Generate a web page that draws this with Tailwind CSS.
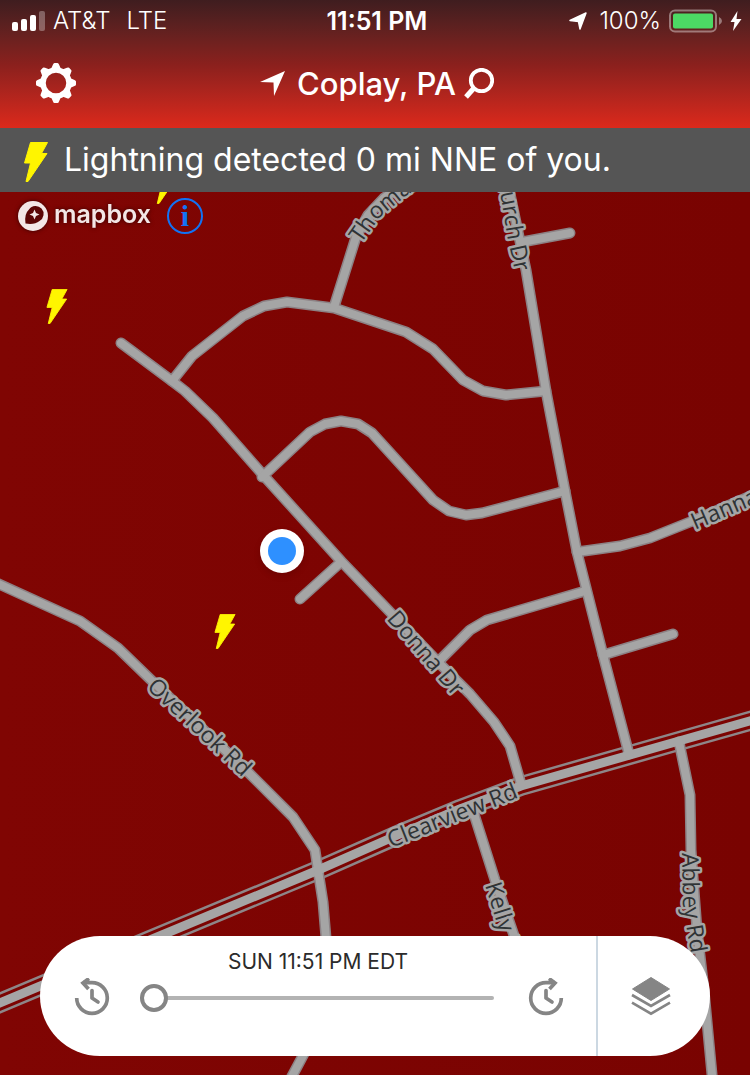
<!DOCTYPE html>
<html lang="en">
<head>
    <meta charset="UTF-8" />
    <meta name="viewport" content="width=device-width, initial-scale=1.0" />
    <title>Lightning Map</title>
    <script src="https://cdn.jsdelivr.net/npm/@tailwindcss/browser@4"></script>
</head>
<body class="flex min-h-screen flex-col bg-[#7c0402] font-['Inter',sans-serif] text-white">

<!-- Shared lightning bolt -->
<svg class="hidden">
    <symbol id="bolt" viewBox="0 0 24 40">
        <path fill="#fff500" stroke="#fff500" stroke-width="1" stroke-linejoin="round" d="M6.500.5H23.500L17.500 11.500H23L4 39.500H2L6.500 21H.5Z" />
    </symbol>
</svg>

<!-- Status bar and title -->
<header class="h-32 bg-linear-to-b from-[#3f1d1f] via-[#8a201d] to-[#dc291b]">
    <div class="grid h-[42px] grid-cols-3 items-center pr-2 pl-3 text-2xl leading-none">
        <div class="flex items-center gap-2">
            <svg class="h-5 w-[33px]" viewBox="0 0 33 20" fill="#fff">
                <rect x="0" y="11" width="6" height="9" rx="2" />
                <rect x="9" y="8" width="6" height="12" rx="2" />
                <rect x="18" y="4" width="6" height="16" rx="2" />
                <rect x="27" y="0" width="6" height="20" rx="2" opacity=".3" />
            </svg>
            <span class="font-light">AT&amp;T</span>
            <span class="ml-2 font-light">LTE</span>
        </div>
        <div class="text-center text-[25px] font-semibold">11:51 PM</div>
        <div class="flex items-center justify-end gap-2">
            <svg class="mr-1 h-[18px] w-[18px]" viewBox="0 0 18 18"><path fill="#fff" stroke="#fff" stroke-width="1.500" stroke-linejoin="round" d="M17 1 11 17 9.500 9.500 1 8.500Z" /></svg>
            <span class="font-light">100%</span>
            <svg class="h-6 w-[53px]" viewBox="0 0 53 24">
                <rect x="1" y="1.500" width="46" height="21" rx="5" fill="none" stroke="#fff" stroke-width="2" opacity=".4" />
                <rect x="4" y="4.500" width="40" height="15" rx="2" fill="#4cd964" />
                <path d="M50 8q3 1.500 3 4t-3 4Z" fill="#fff" opacity=".4" />
            </svg>
            <svg class="h-5 w-3" viewBox="0 0 12 20"><path fill="#fff" d="M7.500 0 .5 11h4L3 20l8.500-12h-5Z" /></svg>
        </div>
    </div>
    <div class="grid h-[82px] grid-cols-[80px_1fr_76px] items-center">
        <button type="button" aria-label="Settings" class="ml-9 h-10 w-10">
            <svg viewBox="-20 -20 40 40" class="h-10 w-10">
                <circle r="13" fill="none" stroke="#fff" stroke-width="5.500" />
                <g fill="#fff">
                    <path id="tooth" d="M-5-14-3-18.500Q-2.500-20-1.500-20H1.500Q2.500-20 3-18.500L5-14Z" />
                    <use href="#tooth" transform="rotate(45)" />
                    <use href="#tooth" transform="rotate(90)" />
                    <use href="#tooth" transform="rotate(135)" />
                    <use href="#tooth" transform="rotate(180)" />
                    <use href="#tooth" transform="rotate(225)" />
                    <use href="#tooth" transform="rotate(270)" />
                    <use href="#tooth" transform="rotate(315)" />
                </g>
            </svg>
        </button>
        <button type="button" class="flex items-center justify-center gap-2 text-[31px] leading-none font-medium">
            <svg class="mr-1 h-[25px] w-[25px]" viewBox="0 0 25 25"><path fill="#fff" d="M25 0 14 25 13.500 11.500 0 11Z" /></svg>
            <span>Coplay, PA</span>
            <svg class="h-[31px] w-[30px]" viewBox="0 0 30 31" fill="none" stroke="#fff">
                <circle cx="17.500" cy="12.500" r="10.700" stroke-width="3.800" />
                <path d="M10 20 2 29" stroke-width="5" />
            </svg>
        </button>
    </div>
</header>

<!-- Alert -->
<div role="alert" class="flex h-16 items-center gap-4 bg-[#555] pl-6">
    <svg class="mt-1 h-10 w-6"><use href="#bolt" /></svg>
    <p class="text-[32px] leading-none">Lightning detected 0 mi NNE of you.</p>
</div>

<!-- Map -->
<main class="relative min-h-[600px] flex-1 overflow-hidden">
    <svg class="absolute inset-0 h-full w-full" viewBox="0 192 750 883" preserveAspectRatio="xMidYMin slice" fill="none">
        <defs>
            <linearGradient id="land">
                <stop offset="0" stop-color="#800503" />
                <stop offset="1" stop-color="#790301" />
            </linearGradient>
            <g id="streets">
                <path d="M121 343 172 381 185 391 213 418 264 476 341 561 440 664 470 694 494 722 510 746 521 784" />
                <path d="M172 381 192 356 243 316 264 306 287 302 334 308 406 332 433 349 463 380 483 391 506 395 546 391" />
                <path d="M334 307 356 237 368 215 384 198 410 180" />
                <path d="M262 477 310 432 325 424 341 421 358 424 372 433 433 500 449 511 466 515 482 513 565 491" />
                <path d="M505 170 526 270 546 391 565 491 577 552 603 655 629 754" />
                <path d="M522 242 570 233" />
                <path d="M577 552 620 546 650 538 690 522 760 492" />
                <path d="M440 660 470 630 487 620 585 591" />
                <path d="M603 655 673 634" />
                <path d="M341 562 300 599" />
                <path d="M-10 580 80 621 118 648 150 679 247 771 293 817 315 850 318 870 323 902 327 950" />
                <path d="M474 814 495 880 519 950" />
                <path d="M679 742 690 795 691 850 697 930 704 990 713 1085" />
                <path d="M306 1050 290 1080" />
            </g>
            <path id="clearview" d="M-10 1007 150 940 316 871 400 834 460 809 521 786 679 741 760 718" />
            <path id="thomas" d="M361 244 380 217 407 195 450 168" />
            <path id="church" d="M484 110 502 203 508 240 515 272" />
            <path id="hanna" d="M695 530 770 498" />
            <path id="donna" d="M386 619 458 702" />
            <path id="overlook" d="M146 688 270 803" />
            <path id="clear-label" d="M391 848 530 793" />
            <path id="kelly" d="M485 885 516 985" />
            <path id="abbey" d="M682 853 683 905 687 930 697 990" />
        </defs>
        <rect x="0" y="192" width="750" height="883" fill="url(#land)" />

        <g stroke-linejoin="round">
            <use href="#clearview" stroke="#8e8688" stroke-width="20" />
            <use href="#clearview" stroke="#7c0402" stroke-width="15" />
        </g>
        <g stroke-linecap="round" stroke-linejoin="round">
            <use href="#streets" stroke="#8c8184" stroke-width="11" />
            <use href="#clearview" stroke="#a5a5a5" stroke-width="9" />
            <use href="#streets" stroke="#a5a5a5" stroke-width="8" />
        </g>

        <g class="font-['Open_Sans',sans-serif] text-[23px]" fill="#2f3335" stroke="#a5a5a5" stroke-width="5" stroke-linejoin="round" paint-order="stroke">
            <text><textPath href="#thomas">Thomas</textPath></text>
            <text text-anchor="end"><textPath href="#church" startOffset="100%">Church Dr</textPath></text>
            <text><textPath href="#hanna">Hanna</textPath></text>
            <text><textPath href="#donna">Donna Dr</textPath></text>
            <text><textPath href="#overlook">Overlook Rd</textPath></text>
            <text><textPath href="#clear-label">Clearview Rd</textPath></text>
            <text><textPath href="#kelly">Kelly Dr</textPath></text>
            <text><textPath href="#abbey">Abbey Rd</textPath></text>
        </g>

        <!-- Strikes -->
        <use href="#bolt" x="46" y="289" width="22" height="35" />
        <use href="#bolt" x="214" y="614" width="22" height="35" />
        <use href="#bolt" x="155" y="169" width="22" height="35" />

        <!-- Current position -->
        <circle cx="282" cy="551" r="22" fill="#fff" class="drop-shadow-md" />
        <circle cx="282" cy="551" r="14" fill="#2e90ff" />
    </svg>

    <div class="absolute top-1.5 left-4 flex items-center gap-4">
        <a href="#" aria-label="Mapbox" class="flex items-center gap-1 text-[#f3e6e6] drop-shadow-[0_0_2px_#300]">
            <svg class="h-[34px] w-[34px]" viewBox="0 0 34 34">
                <circle cx="17" cy="17" r="15" fill="#f3e6e6" />
                <path fill="#5b0505" d="M9.500 24.500Q8 15 13 10.500A8 8 0 1 1 23.500 22Q18.500 26 9.500 24.500Z" />
                <path fill="#f3e6e6" d="m18.500 10.500 1.500 3.500 3.500 1.500L20 17l-1.500 3.500L17 17l-3.500-1.500L17 14Z" />
            </svg>
            <span class="mb-1 text-[25px] leading-none font-semibold">mapbox</span>
        </a>
        <button type="button" aria-label="Map information" class="flex h-9 w-9 items-center justify-center rounded-full border-2 border-[#1173f5] font-['Liberation_Serif',serif] text-[30px] leading-none font-bold text-[#1173f5]">i</button>
    </div>

    <!-- Timeline -->
    <div class="absolute inset-x-10 bottom-[19px] flex h-30 overflow-hidden rounded-full bg-white">
        <div class="flex flex-1 flex-col">
            <label for="time" class="mt-4 text-center text-[21px] leading-5 text-[#2b2b2b]">SUN 11:51 PM EDT</label>
            <div class="mt-1.5 flex items-center pr-[30px] pl-8">
                <button type="button" aria-label="Back in time" class="h-10 w-10">
                    <svg class="h-10 w-10" viewBox="0 0 40 40" fill="none" stroke="#858585" stroke-width="3.700">
                        <path d="M4.700 20A15.300 15.300 0 1 0 20 4.700H11" />
                        <path d="M17 .5 11 5 16.500 11" />
                        <path stroke-linecap="round" stroke-linejoin="round" d="M20 12.500V20L26 24" />
                    </svg>
                </button>
                <input id="time" type="range" min="0" max="100" value="0" class="mr-8 ml-7 h-7 min-w-0 flex-1 appearance-none bg-transparent [&::-webkit-slider-runnable-track]:h-1 [&::-webkit-slider-runnable-track]:rounded-full [&::-webkit-slider-runnable-track]:bg-[#b3b3b3] [&::-webkit-slider-thumb]:-mt-3 [&::-webkit-slider-thumb]:h-7 [&::-webkit-slider-thumb]:w-7 [&::-webkit-slider-thumb]:appearance-none [&::-webkit-slider-thumb]:rounded-full [&::-webkit-slider-thumb]:border-4 [&::-webkit-slider-thumb]:border-solid [&::-webkit-slider-thumb]:border-[#858585] [&::-webkit-slider-thumb]:bg-white" />
                <button type="button" aria-label="Forward in time" class="h-10 w-10">
                    <svg class="h-10 w-10" viewBox="0 0 40 40" fill="none" stroke="#858585" stroke-width="3.700">
                        <path d="M35.300 20A15.300 15.300 0 1 1 20 4.700H29" />
                        <path d="M23 .5 29 5 23.500 11" />
                        <path stroke-linecap="round" stroke-linejoin="round" d="M20 12.500V20L26 24" />
                    </svg>
                </button>
            </div>
        </div>
        <button type="button" aria-label="Map layers" class="flex w-[114px] items-center border-l-2 border-[#ccd8e2] pl-[33px]">
            <svg class="h-10 w-10" viewBox="0 0 40 40" fill="none" stroke="#858585" stroke-width="2.600">
                <path fill="#858585" stroke-width="1" stroke-linejoin="round" d="M20 1.500 38.500 13 20 24.500 1.500 13Z" />
                <path d="M1 19 20 30 39 19" />
                <path d="M1 26.700 20 37.700 39 26.700" />
            </svg>
        </button>
    </div>
</main>

</body>
</html>
